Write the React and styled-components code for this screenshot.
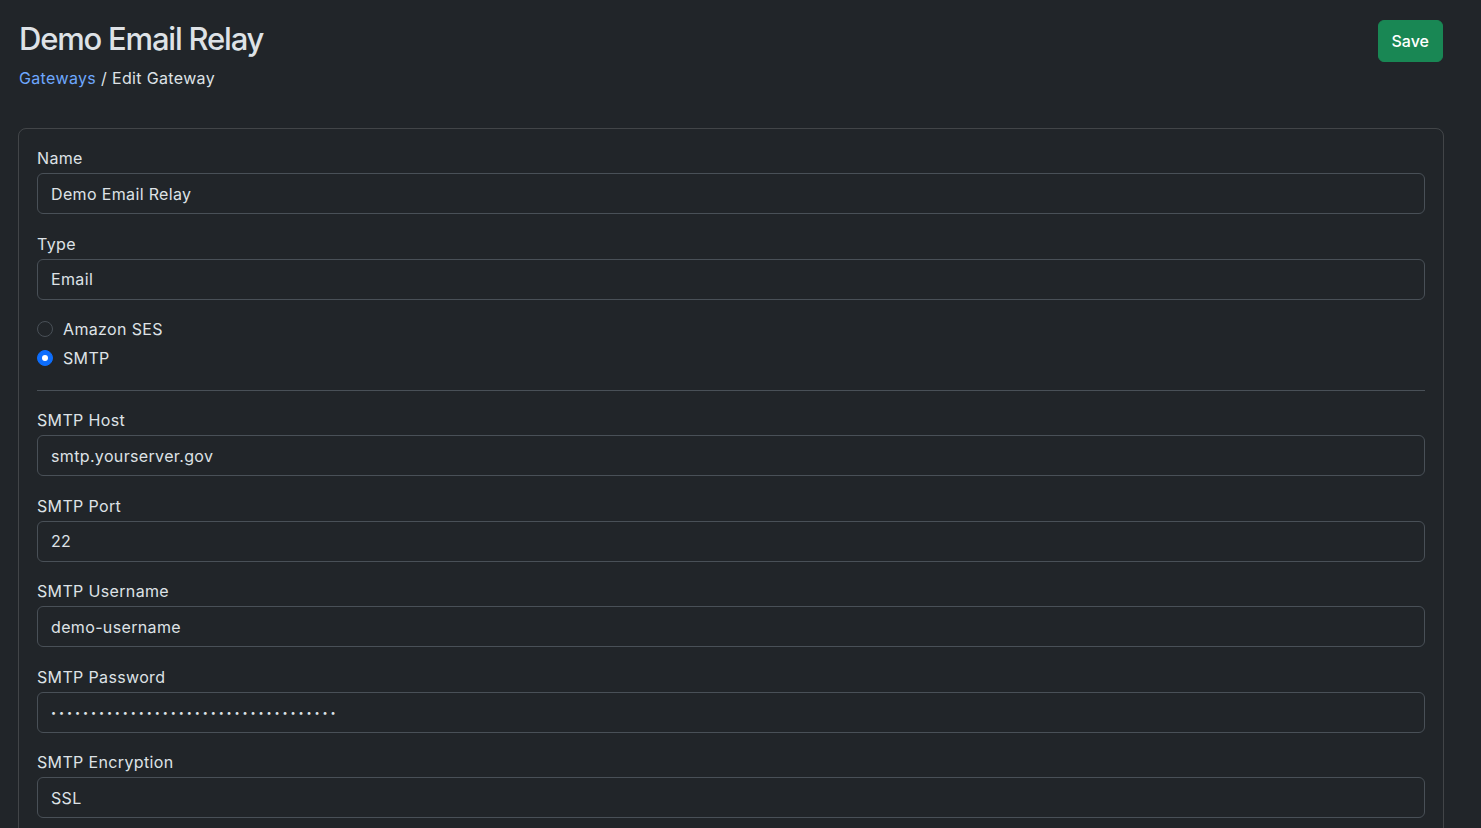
import React from 'react';
import styled, { createGlobalStyle } from 'styled-components';

const GlobalStyle = createGlobalStyle`
  html, body {
    margin: 0;
    background-color: #212529;
    color: #dee2e6;
    font-family: Inter, "Noto Sans", "Liberation Sans", sans-serif;
    font-size: 16px;
    line-height: 1.5;
    letter-spacing: 0.35px;
  }

  * {
    box-sizing: border-box;
  }
`;

const Page = styled.div`
  padding: 20px 37px 0 18px;
  min-height: 828px;
`;

const Header = styled.div`
  display: flex;
  justify-content: space-between;
  align-items: flex-start;
`;

const TitleBlock = styled.div`
  padding-left: 1px;
`;

const Title = styled.h2`
  margin: 0;
  font-size: 31px;
  font-weight: 500;
  line-height: 38px;
  letter-spacing: -1.2px;
  color: #dee2e6;
`;

const Breadcrumb = styled.div`
  margin-top: 8px;
  font-size: 16px;
  line-height: 24px;
  color: #dee2e6;

  a {
    color: #6ea8fe;
    text-decoration: none;
  }
`;

const SaveButton = styled.button`
  height: 42px;
  padding: 0 13px;
  margin-right: 1px;
  border: 1px solid #198754;
  border-radius: 6px;
  background-color: #198754;
  color: #fff;
  font-family: inherit;
  font-size: 16px;
  font-weight: 500;
  line-height: 24px;
  letter-spacing: 0;
  cursor: pointer;
`;

const Card = styled.div`
  margin-top: 38px;
  border: 1px solid rgba(255, 255, 255, 0.15);
  border-radius: 8px;
  padding: 17px 18px 0 18px;
`;

const Group = styled.div`
  margin-bottom: 17.5px;
`;

const Label = styled.label`
  display: block;
  margin-bottom: 3px;
  font-size: 16px;
  line-height: 24px;
  color: #dee2e6;
`;

const Input = styled.input`
  display: block;
  width: 100%;
  height: 41px;
  padding: 0 13px;
  border: 1px solid #495057;
  border-radius: 6px;
  background-color: #212529;
  color: #dee2e6;
  font-family: inherit;
  font-size: ${p => (p.$secret ? '9px' : '16px')};
  letter-spacing: ${p => (p.$secret ? '2.92px' : '0.35px')};
  outline: none;
`;

const RadioList = styled.div`
  display: flex;
  flex-direction: column;
  gap: 5px;
  margin-top: 1.5px;
`;

const RadioRow = styled.label`
  display: flex;
  align-items: center;
  gap: 10px;
  height: 24px;
  font-size: 16px;
`;

const RadioDot = styled.span`
  width: 16px;
  height: 16px;
  border-radius: 50%;
  flex-shrink: 0;
  border: 1px solid ${p => (p.$checked ? '#0d6efd' : '#495057')};
  background-color: ${p => (p.$checked ? '#0d6efd' : '#212529')};
  display: flex;
  align-items: center;
  justify-content: center;

  &::after {
    content: '';
    width: 6px;
    height: 6px;
    border-radius: 50%;
    background-color: #fff;
    display: ${p => (p.$checked ? 'block' : 'none')};
  }
`;

const Divider = styled.hr`
  margin: 20px 0 17px;
  border: 0;
  border-top: 1px solid #495057;
  opacity: 1;
`;

const Field = ({ label, value, secret }) => (
  <Group>
    <Label>{label}</Label>
    <Input type="text" readOnly value={value} $secret={secret} />
  </Group>
);

const App = () => {
  return (
    <Page>
      <GlobalStyle />
      <Header>
        <TitleBlock>
          <Title>Demo Email Relay</Title>
          <Breadcrumb>
            <a href="#gateways">Gateways</a> / Edit Gateway
          </Breadcrumb>
        </TitleBlock>
        <SaveButton>Save</SaveButton>
      </Header>

      <Card>
        <Field label="Name" value="Demo Email Relay" />
        <Field label="Type" value="Email" />

        <RadioList>
          <RadioRow>
            <RadioDot />
            Amazon SES
          </RadioRow>
          <RadioRow>
            <RadioDot $checked />
            SMTP
          </RadioRow>
        </RadioList>

        <Divider />

        <Field label="SMTP Host" value="smtp.yourserver.gov" />
        <Field label="SMTP Port" value="22" />
        <Field label="SMTP Username" value="demo-username" />
        <Field label="SMTP Password" value={'•'.repeat(36)} secret />
        <Field label="SMTP Encryption" value="SSL" />
      </Card>
    </Page>
  );
};

export default App;
